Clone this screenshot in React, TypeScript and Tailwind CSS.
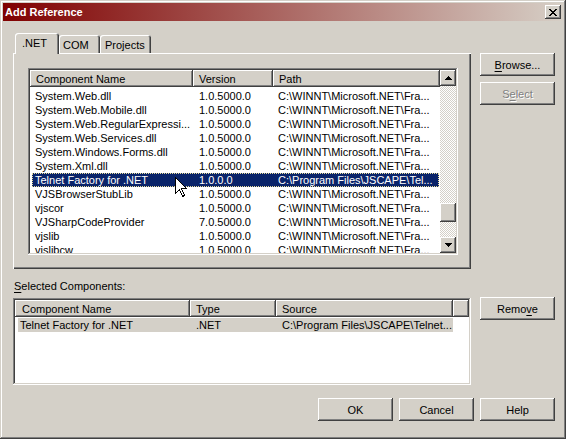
import React from "react";

const raised =
  "shadow-[inset_-1px_-1px_#404040,inset_1px_1px_#ffffff,inset_-2px_-2px_#808080,inset_2px_2px_#d4d0c8]";
const sunken =
  "shadow-[inset_-1px_-1px_#ffffff,inset_1px_1px_#808080,inset_-2px_-2px_#d4d0c8,inset_2px_2px_#404040]";
const header =
  "shadow-[inset_-1px_-1px_#404040,inset_1px_1px_#ffffff,inset_-2px_-2px_#808080]";

type Row = { name: string; ver: string; path: string; sel?: boolean };

const NETPATH = "C:\\WINNT\\Microsoft.NET\\Fra...";

const rows: Row[] = [
  { name: "System.Web.dll", ver: "1.0.5000.0", path: NETPATH },
  { name: "System.Web.Mobile.dll", ver: "1.0.5000.0", path: NETPATH },
  { name: "System.Web.RegularExpressi...", ver: "1.0.5000.0", path: NETPATH },
  { name: "System.Web.Services.dll", ver: "1.0.5000.0", path: NETPATH },
  { name: "System.Windows.Forms.dll", ver: "1.0.5000.0", path: NETPATH },
  { name: "System.Xml.dll", ver: "1.0.5000.0", path: NETPATH },
  {
    name: "Telnet Factory for .NET",
    ver: "1.0.0.0",
    path: "C:\\Program Files\\JSCAPE\\Tel...",
    sel: true,
  },
  { name: "VJSBrowserStubLib", ver: "1.0.5000.0", path: NETPATH },
  { name: "vjscor", ver: "1.0.5000.0", path: NETPATH },
  { name: "VJSharpCodeProvider", ver: "7.0.5000.0", path: NETPATH },
  { name: "vjslib", ver: "1.0.5000.0", path: NETPATH },
  { name: "vjslibcw", ver: "1.0.5000.0", path: NETPATH },
];

function Btn({
  children,
  disabled,
  className = "",
}: {
  children: React.ReactNode;
  disabled?: boolean;
  className?: string;
}) {
  return (
    <div
      className={`w-[75px] h-[23px] flex items-center justify-center bg-[#d4d0c8] ${raised} ${
        disabled ? "text-[#808080] [text-shadow:1px_1px_0_#ffffff]" : "text-black"
      } ${className}`}
    >
      {children}
    </div>
  );
}

function Arrow({ down }: { down?: boolean }) {
  return (
    <svg width="7" height="4" viewBox="0 0 7 4" shapeRendering="crispEdges">
      {down ? (
        <g fill="#000">
          <rect x="0" y="0" width="7" height="1" />
          <rect x="1" y="1" width="5" height="1" />
          <rect x="2" y="2" width="3" height="1" />
          <rect x="3" y="3" width="1" height="1" />
        </g>
      ) : (
        <g fill="#000">
          <rect x="3" y="0" width="1" height="1" />
          <rect x="2" y="1" width="3" height="1" />
          <rect x="1" y="2" width="5" height="1" />
          <rect x="0" y="3" width="7" height="1" />
        </g>
      )}
    </svg>
  );
}

function CloseGlyph() {
  const px: [number, number, number][] = [
    [0, 0, 2], [6, 0, 2],
    [1, 1, 2], [5, 1, 2],
    [2, 2, 4],
    [3, 3, 2],
    [2, 4, 4],
    [1, 5, 2], [5, 5, 2],
    [0, 6, 2], [6, 6, 2],
  ];
  return (
    <svg width="8" height="7" viewBox="0 0 8 7" shapeRendering="crispEdges">
      {px.map(([x, y, w], i) => (
        <rect key={i} x={x} y={y} width={w} height={1} fill="#000" />
      ))}
    </svg>
  );
}

function Cursor() {
  return (
    <svg width="13" height="21" viewBox="0 0 13 21" shapeRendering="crispEdges">
      <path
        d="M0.5 0.5 L0.5 16.5 L4.5 12.5 L7.5 19.5 L9.5 18.5 L6.5 11.5 L11.5 11.5 Z"
        fill="#ffffff"
        stroke="#000000"
        strokeWidth="1"
      />
    </svg>
  );
}

export default function App() {
  return (
    <div className="relative w-[566px] h-[439px] overflow-hidden bg-[#d4d0c8] p-[3px] flex flex-col text-[11px] leading-[14px] text-black font-['Liberation_Sans',Arial,sans-serif] shadow-[inset_-1px_-1px_#404040,inset_1px_1px_#d4d0c8,inset_-2px_-2px_#808080,inset_2px_2px_#ffffff]">
      {/* Title bar */}
      <div className="h-[18px] flex items-center justify-between pl-[2px] pr-[2px] bg-[linear-gradient(to_right,#800000,#d6cfc6)]">
        <span className="text-white font-bold text-[11px]">Add Reference</span>
        <div className={`w-[16px] h-[14px] bg-[#d4d0c8] flex items-center justify-center ${raised}`}>
          <CloseGlyph />
        </div>
      </div>

      {/* Content */}
      <div className="pl-[10px] flex flex-col">
        {/* Top section */}
        <div className="mt-[12px] flex">
          <div className="w-[458px] flex flex-col">
            {/* Tabs */}
            <div className="h-[20px] flex items-end pl-[2px]">
              <div className="relative z-10 -mb-px w-[44px] h-[21px] pl-[7px] pt-[3px] bg-[#d4d0c8] rounded-t-[3px] shadow-[inset_1px_1px_#ffffff,inset_-1px_0_#404040,inset_-2px_0_#808080]">
                .NET
              </div>
              <div className="w-[41px] h-[18px] pl-[4px] pt-[3px] bg-[#d4d0c8] rounded-t-[3px] shadow-[inset_1px_1px_#ffffff,inset_-1px_0_#404040,inset_-2px_0_#808080]">
                COM
              </div>
              <div className="w-[51px] h-[18px] pl-[5px] pt-[3px] bg-[#d4d0c8] rounded-t-[3px] shadow-[inset_1px_1px_#ffffff,inset_-1px_0_#404040,inset_-2px_0_#808080]">
                Projects
              </div>
            </div>
            {/* Panel */}
            <div className="h-[216px] pl-[15px] pt-[15px] bg-[#d4d0c8] shadow-[inset_1px_1px_#ffffff,inset_-1px_-1px_#404040,inset_-2px_-2px_#808080]">
              <div className={`w-[430px] h-[187px] bg-white p-[2px] flex ${sunken}`}>
                <div className="flex-1 flex flex-col overflow-hidden">
                  <div className="h-[17px] flex shrink-0">
                    <div className={`w-[163px] pl-[6px] flex items-center bg-[#d4d0c8] ${header}`}>
                      Component Name
                    </div>
                    <div className={`w-[80px] pl-[6px] flex items-center bg-[#d4d0c8] ${header}`}>
                      Version
                    </div>
                    <div className={`flex-1 pl-[6px] flex items-center bg-[#d4d0c8] ${header}`}>
                      Path
                    </div>
                  </div>
                  <div className="pt-[2px] flex flex-col">
                    {rows.map((r) => (
                      <div
                        key={r.name}
                        className={`h-[14px] shrink-0 ml-[2px] mr-px flex items-center whitespace-nowrap ${
                          r.sel
                            ? "bg-[#0a246a] text-white outline-1 outline-dotted outline-[#e8dc9a] -outline-offset-1"
                            : ""
                        }`}
                      >
                        <span className="w-[161px] pl-[3px]">{r.name}</span>
                        <span className="w-[80px] pl-[6px]">{r.ver}</span>
                        <span className="flex-1 pl-[5px]">{r.path}</span>
                      </div>
                    ))}
                  </div>
                </div>
                {/* Scrollbar */}
                <div className="w-[16px] flex flex-col">
                  <div className={`h-[16px] shrink-0 flex items-center justify-center bg-[#d4d0c8] ${raised}`}>
                    <Arrow />
                  </div>
                  <div className="flex-1 bg-[repeating-conic-gradient(#ffffff_0_25%,#d4d0c8_0_50%)] bg-[length:2px_2px]">
                    <div className={`mt-[117px] h-[19px] bg-[#d4d0c8] ${raised}`} />
                  </div>
                  <div className={`h-[16px] shrink-0 flex items-center justify-center bg-[#d4d0c8] ${raised}`}>
                    <Arrow down />
                  </div>
                </div>
              </div>
            </div>
          </div>
          {/* Right buttons */}
          <div className="ml-[9px] pt-[20px] flex flex-col gap-[6px]">
            <Btn>
              <span>
                <span className="underline underline-offset-2">B</span>rowse...
              </span>
            </Btn>
            <Btn disabled>
              <span>
                S<span className="underline underline-offset-2">e</span>lect
              </span>
            </Btn>
          </div>
        </div>

        {/* Selected components */}
        <div className="mt-[10px] pl-px h-[14px]">
          <span className="underline underline-offset-2">S</span>elected Components:
        </div>
        <div className="mt-[5px] flex items-start">
          <div className={`w-[458px] h-[87px] bg-white p-[2px] flex flex-col ${sunken}`}>
            <div className="h-[17px] flex shrink-0">
              <div className={`w-[175px] pl-[7px] flex items-center bg-[#d4d0c8] ${header}`}>
                Component Name
              </div>
              <div className={`w-[86px] pl-[6px] flex items-center bg-[#d4d0c8] ${header}`}>
                Type
              </div>
              <div className={`w-[177px] pl-[6px] flex items-center bg-[#d4d0c8] ${header}`}>
                Source
              </div>
              <div className={`flex-1 bg-[#d4d0c8] ${header}`} />
            </div>
            <div className="pt-px">
              <div className="h-[14px] ml-[3px] w-[435px] flex items-center whitespace-nowrap bg-[#d4d0c8]">
                <span className="w-[172px] pl-[2px]">Telnet Factory for .NET</span>
                <span className="w-[86px] pl-[6px]">.NET</span>
                <span className="w-[177px] pl-[6px]">{"C:\\Program Files\\JSCAPE\\Telnet..."}</span>
              </div>
            </div>
          </div>
          <div className="ml-[9px] -mt-px">
            <Btn>
              <span>
                Remo<span className="underline underline-offset-2">v</span>e
              </span>
            </Btn>
          </div>
        </div>

        {/* Bottom buttons */}
        <div className="mt-[13px] w-[542px] flex justify-end gap-[6px]">
          <Btn>OK</Btn>
          <Btn>Cancel</Btn>
          <Btn>Help</Btn>
        </div>
      </div>

      {/* Mouse cursor */}
      <div className="absolute left-[175px] top-[177px] pointer-events-none">
        <Cursor />
      </div>
    </div>
  );
}
